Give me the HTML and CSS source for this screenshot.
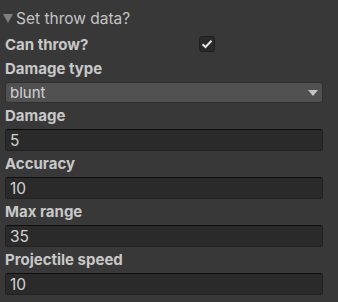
FILE: index.html
```html
<!DOCTYPE html>
<html>
<head>
<meta charset="utf-8">
<link rel="stylesheet" href="styles.css">
</head>
<body>
<div class="panel">
  <div class="foldout">
    <svg class="fold-arrow" width="10" height="9" viewBox="0 0 10 9"><path d="M0 0H10L5 9Z" fill="#808080"/></svg>
    <span>Set throw data?</span>
  </div>
  <div class="check-row">
    <span class="label">Can throw?</span>
    <span class="checkbox">
      <svg width="12" height="10" viewBox="0 0 12 10"><path d="M1.5 5.2L4.5 8L10.5 1.8" fill="none" stroke="#e6e6e6" stroke-width="2"/></svg>
    </span>
  </div>
  <div class="field">
    <span class="label">Damage type</span>
    <div class="dropdown">
      <span>blunt</span>
      <svg width="10" height="6" viewBox="0 0 10 6"><path d="M0 0H10L5 6Z" fill="#c4c4c4"/></svg>
    </div>
  </div>
  <div class="field">
    <span class="label">Damage</span>
    <div class="input">5</div>
  </div>
  <div class="field">
    <span class="label">Accuracy</span>
    <div class="input">10</div>
  </div>
  <div class="field">
    <span class="label">Max range</span>
    <div class="input">35</div>
  </div>
  <div class="field">
    <span class="label">Projectile speed</span>
    <div class="input">10</div>
  </div>
</div>
</body>
</html>
```
FILE: styles.css
```css
html, body {
  margin: 0;
  padding: 0;
  background: #383838;
}
.panel {
  width: 338px;
  height: 302px;
  box-sizing: border-box;
  padding: 6px 15px 0 5px;
  font-family: Inter, "Noto Sans", sans-serif;
  font-size: 15px;
  color: #c4c4c4;
  display: flex;
  flex-direction: column;
}
.foldout {
  display: flex;
  align-items: center;
  height: 24px;
  margin-left: -2px;
  gap: 3px;
  font-size: 15.5px;
}
.label {
  font-weight: 700;
  color: #c8c8c8;
}
.check-row {
  display: flex;
  align-items: center;
  height: 28px;
}
.check-row .label {
  width: 194px;
}
.checkbox {
  width: 14px;
  height: 14px;
  background: #2a2a2a;
  border: 1px solid #1f1f1f;
  border-radius: 3px;
  display: flex;
  align-items: center;
  justify-content: center;
}
.field {
  display: flex;
  flex-direction: column;
}
.field .label {
  height: 24px;
  box-sizing: border-box;
  padding-bottom: 3px;
  display: flex;
  align-items: center;
}
.dropdown {
  height: 19px;
  background: #515151;
  border: 1px solid #2f2f2f;
  border-radius: 3px;
  display: flex;
  align-items: center;
  justify-content: space-between;
  padding: 0 4px 0 4px;
  color: #d2d2d2;
  margin-bottom: 2px;
}
.input {
  height: 20px;
  background: #2a2a2a;
  border: 1px solid #212121;
  border-top-color: #0d0d0d;
  border-radius: 3px;
  display: flex;
  align-items: center;
  padding: 0 4px;
  color: #d2d2d2;
  margin-bottom: 2px;
  font-size: 15.5px;
}
```
